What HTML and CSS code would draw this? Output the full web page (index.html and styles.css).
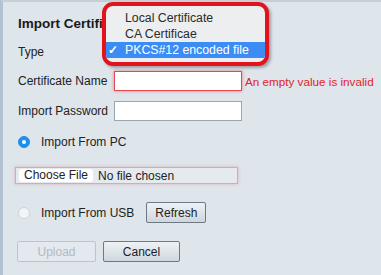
FILE: index.html
```html
<!DOCTYPE html>
<html lang="en">
    <head>
        <meta charset="UTF-8">
        <title>Import Certificate</title>
        <link rel="stylesheet" href="styles.css">
    </head>
    <body>
        <main class="panel">
            <h2>Import Certificate</h2>

            <div class="row type-row">
                <label>Type</label>
                <div class="select">
                    <ul class="menu">
                        <li>Local Certificate</li>
                        <li>CA Certificae</li>
                        <li class="selected"><span class="check">✓</span>PKCS#12 encoded file</li>
                    </ul>
                </div>
            </div>

            <div class="row name-row">
                <label>Certificate Name</label>
                <input class="invalid">
                <span class="error">An empty value is invalid</span>
            </div>

            <div class="row pass-row">
                <label>Import Password</label>
                <input type="password">
            </div>

            <div class="row radio-row pc-row">
                <span class="radio checked"></span>
                <span>Import From PC</span>
            </div>

            <div class="file">
                <span class="file-btn">Choose File</span>
                <span>No file chosen</span>
            </div>

            <div class="row radio-row usb-row">
                <span class="radio"></span>
                <span>Import From USB</span>
                <button class="btn refresh">Refresh</button>
            </div>

            <div class="row actions">
                <button class="btn upload" disabled>Upload</button>
                <button class="btn cancel">Cancel</button>
            </div>
        </main>
    </body>
</html>
```

FILE: styles.css
```css
body{
    margin: 0;
    font-family: "Liberation Sans", Arial, sans-serif;
    color: #222;
}

.panel{
    height: 273px;
    background: #dee5eb;
    border-top: 2px solid #c6ced6;
    border-left: 3px solid #b3c2d0;
    padding-left: 15px;
    overflow: hidden;
}

h2{
    margin: 14px 0 0;
    font-size: 13.5px;
    line-height: 16px;
    color: #1a1a1a;
}

.row{
    display: flex;
    align-items: center;
    font-size: 12px;

    label{
        width: 96px;
        flex-shrink: 0;
    }

    input{
        box-sizing: border-box;
        width: 128px;
        height: 20px;
        margin: 0;
        border: 1px solid #9ba7b1;
        background: #fff;
        outline: none;
    }
}

.type-row{
    height: 20px;
    margin-top: 10px;
}

.name-row{
    height: 20px;
    margin-top: 9px;

    input.invalid{
        border-color: #e4494f;
        box-shadow: 0 0 3px rgba(232, 60, 70, 0.6);
    }
}

.error{
    margin-left: 3px;
    color: #e3232b;
    font-size: 11.7px;
    white-space: nowrap;
}

.pass-row{
    height: 20px;
    margin-top: 10px;
}

.select{
    position: relative;
    height: 20px;
}

.menu{
    position: absolute;
    left: -12px;
    top: -40px;
    width: 159px;
    height: 52px;
    margin: 0;
    padding: 4px 0 0;
    list-style: none;
    background: #eceeef;
    border: 4px solid #e1141e;
    border-radius: 11px;
    box-shadow: 2px 2px 3px rgba(0, 0, 0, 0.3);
    font-size: 12.3px;
    color: #2b2b2b;
    overflow: hidden;

    li{
        height: 16px;
        line-height: 16px;
        padding-left: 19px;
        white-space: nowrap;
    }

    .selected{
        position: relative;
        background: #3c8cf5;
        color: #fff;
    }

    .check{
        position: absolute;
        left: 2px;
        font-weight: bold;
    }
}

.radio-row{
    span:nth-child(2){
        margin-left: 11px;
    }
}

.radio{
    box-sizing: border-box;
    width: 12px;
    height: 12px;
    border-radius: 50%;
    background: #f3f5f7;
    border: 1px solid #ccd4db;

    &.checked{
        background: #1f8ef1;
        border-color: #1f8ef1;
        display: grid;
        place-items: center;

        &::after{
            content: "";
            width: 4px;
            height: 4px;
            border-radius: 50%;
            background: #fff;
        }
    }
}

.pc-row{
    height: 16px;
    margin-top: 13px;
}

.file{
    box-sizing: border-box;
    display: flex;
    align-items: center;
    gap: 5px;
    width: 223px;
    height: 17px;
    margin: 17px 0 0 -3px;
    padding-left: 3px;
    border: 1px solid #e9a2a8;
    box-shadow: 0 0 3px rgba(232, 110, 120, 0.45);
    background: #e5eaee;
    font-size: 12px;

    .file-btn{
        background: #fff;
        border-radius: 3px;
        padding: 0 5px;
        line-height: 13px;
    }
}

.usb-row{
    height: 21px;
    margin-top: 18px;

    .refresh{
        width: 60px;
        margin-left: 12px;
    }
}

.btn{
    height: 21px;
    padding: 0;
    font-family: inherit;
    font-size: 12px;
    color: #222;
    border: 1px solid #6e7983;
    border-radius: 2px;
    background: linear-gradient(#eef2f5, #cfd7de);
}

.actions{
    height: 21px;
    margin-top: 18px;
    gap: 7px;

    .upload{
        width: 79px;
        margin-left: -1px;
        color: #b2bac2;
        border-color: #bcc5cd;
        background: #e3e9ee;
    }

    .cancel{
        width: 77px;
    }
}
```
